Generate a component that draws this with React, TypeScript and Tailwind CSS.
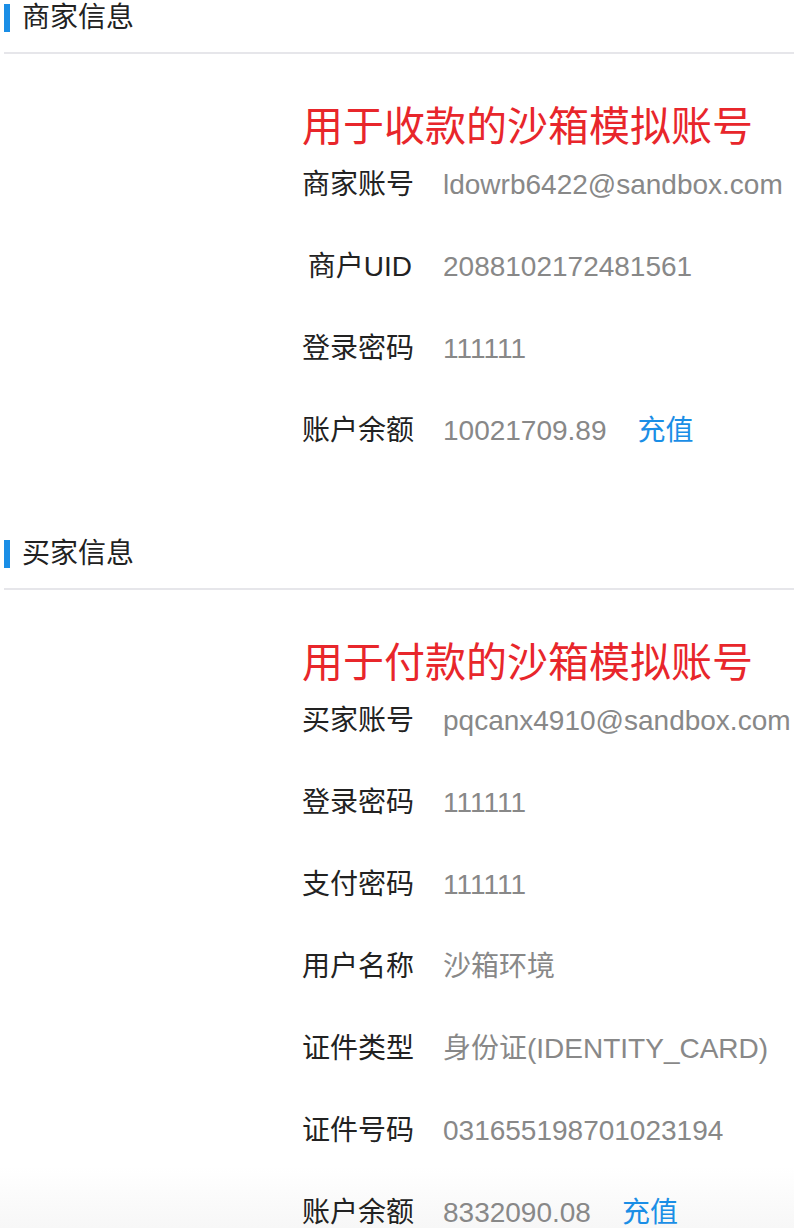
import React from 'react';

interface Row {
  label: string;
  value: string;
  recharge?: boolean;
}

interface SectionProps {
  title: string;
  subtitle: string;
  rows: Row[];
}

const merchantRows: Row[] = [
  { label: '商家账号', value: 'ldowrb6422@sandbox.com' },
  { label: '商户UID', value: '2088102172481561' },
  { label: '登录密码', value: '111111' },
  { label: '账户余额', value: '10021709.89', recharge: true },
];

const buyerRows: Row[] = [
  { label: '买家账号', value: 'pqcanx4910@sandbox.com' },
  { label: '登录密码', value: '111111' },
  { label: '支付密码', value: '111111' },
  { label: '用户名称', value: '沙箱环境' },
  { label: '证件类型', value: '身份证(IDENTITY_CARD)' },
  { label: '证件号码', value: '031655198701023194' },
  { label: '账户余额', value: '8332090.08', recharge: true },
];

const Section: React.FC<SectionProps> = ({ title, subtitle, rows }) => {
  return (
    <section>
      <div className="flex items-center h-[28px] pl-[4px]">
        <span className="w-[6px] h-[28px] bg-[#1a8ee6]" />
        <h2 className="ml-[12px] text-[28px] leading-[28px] text-[#222] font-normal">{title}</h2>
      </div>
      <div className="mt-[20px] ml-[4px] h-[2px] bg-[#e6e6ea]" />
      <div className="pl-[302px]">
        <p className="mt-[49px] text-[41px] leading-[48px] text-[#e8262b] whitespace-nowrap">{subtitle}</p>
        <div className="mt-[20px] flex flex-col gap-[54px]">
          {rows.map((row) => (
            <div key={row.label + row.value} className="flex items-center h-[28px] text-[28px] leading-[28px] whitespace-nowrap">
              <span className="w-[110px] text-right text-[#222]">{row.label}</span>
              <span className="ml-[31px] text-[#888]">{row.value}</span>
              {row.recharge && <span className="ml-[31px] text-[#1a8ee6]">充值</span>}
            </div>
          ))}
        </div>
      </div>
    </section>
  );
};

export default function App() {
  return (
    <div
      className="w-[794px] h-[1228px] overflow-hidden pt-[4px] bg-linear-to-b from-white from-[95%] to-[#f7f7f7]"
      style={{ fontFamily: '"Liberation Sans", "Noto Sans CJK SC", sans-serif' }}
    >
      <Section title="商家信息" subtitle="用于收款的沙箱模拟账号" rows={merchantRows} />
      <div className="h-[95px]" />
      <Section title="买家信息" subtitle="用于付款的沙箱模拟账号" rows={buyerRows} />
    </div>
  );
}
